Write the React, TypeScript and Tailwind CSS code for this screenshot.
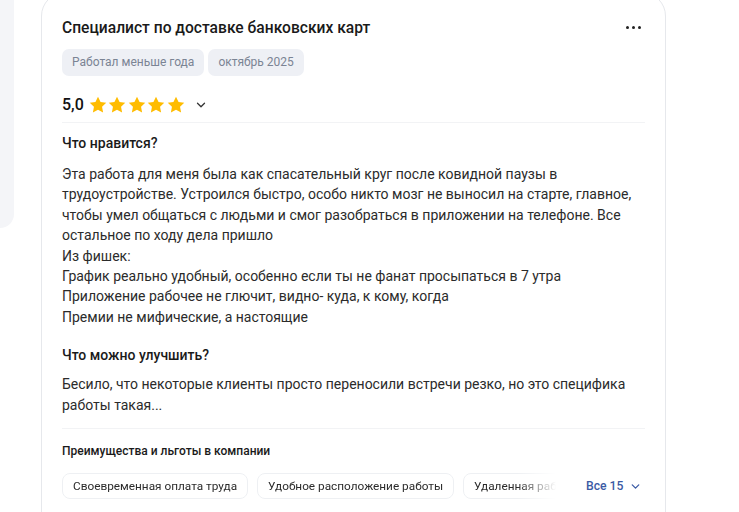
import { ChevronDown } from "lucide-react";

const likes = [
  "Эта работа для меня была как спасательный круг после ковидной паузы в трудоустройстве. Устроился быстро, особо никто мозг не выносил на старте, главное, чтобы умел общаться с людьми и смог разобраться в приложении на телефоне. Все остальное по ходу дела пришло",
  "Из фишек:",
  "График реально удобный, особенно если ты не фанат просыпаться в 7 утра",
  "Приложение рабочее не глючит, видно- куда, к кому, когда",
  "Премии не мифические, а настоящие",
];

const perks = [
  "Своевременная оплата труда",
  "Удобное расположение работы",
  "Удаленная работа",
];

function Star() {
  return (
    <svg width="18" height="18" viewBox="0 0 24 24" fill="#ffbc00">
      <path d="M12 1l3.4 7 7.6 1-5.6 5.3 1.4 7.7L12 18.3 5.2 22l1.4-7.7L1 9l7.6-1z" />
    </svg>
  );
}

export default function App() {
  return (
    <div
      className="flex h-[512px] w-[739px] overflow-hidden bg-white text-[#1f1f1f]"
      style={{ fontFamily: "Roboto, 'Noto Sans', sans-serif" }}
    >
      <div className="h-[228px] w-[14px] shrink-0 rounded-br-[18px] bg-[#f4f5f8]" />

      <div className="ml-[27px] -mt-[8px] w-[625px] shrink-0 self-start rounded-[24px] border border-[#e6e8ec] bg-white px-[20px] pt-[23px] pb-[40px]">
        <div className="flex items-start justify-between">
          <h1 className="text-[15.6px] font-medium leading-[24px] text-[#1a1a1a]">
            Специалист по доставке банковских карт
          </h1>
          <div className="mt-[10px] mr-[4px] flex gap-[3px]">
            <span className="h-[3px] w-[3px] rounded-full bg-[#222]" />
            <span className="h-[3px] w-[3px] rounded-full bg-[#222]" />
            <span className="h-[3px] w-[3px] rounded-full bg-[#222]" />
          </div>
        </div>

        <div className="mt-[9px] flex gap-[4px]">
          <span className="rounded-[7px] bg-[#eef0f5] px-[10px] py-[5px] text-[12px] leading-[17px] text-[#7b8494]">
            Работал меньше года
          </span>
          <span className="rounded-[7px] bg-[#eef0f5] px-[10px] py-[5px] text-[12px] leading-[17px] text-[#7b8494]">
            октябрь 2025
          </span>
        </div>

        <div className="mt-[18px] flex items-center">
          <span className="text-[16px] font-medium leading-[22px] text-[#111]">5,0</span>
          <div className="ml-[5px] flex gap-[1.5px]">
            <Star />
            <Star />
            <Star />
            <Star />
            <Star />
          </div>
          <ChevronDown className="ml-[9px] text-[#333]" size={14} strokeWidth={2.2} />
        </div>

        <div className="mt-[6px] h-px bg-[#f2f3f5]" />

        <h2 className="mt-[10px] text-[14px] font-medium leading-[20px] text-[#1a1a1a]">
          Что нравится?
        </h2>
        <div className="mt-[11px] text-[14px] leading-[20.4px] text-[#2b2b2b]">
          {likes.map((line) => (
            <p key={line}>{line}</p>
          ))}
        </div>

        <h2 className="mt-[18px] text-[14px] font-medium leading-[20px] text-[#1a1a1a]">
          Что можно улучшить?
        </h2>
        <p className="mt-[9px] text-[14px] leading-[20.4px] text-[#2b2b2b]">
          Бесило, что некоторые клиенты просто переносили встречи резко, но это специфика работы
          такая...
        </p>

        <div className="mt-[13px] h-px bg-[#f2f3f5]" />

        <h3 className="mt-[13px] text-[12px] font-medium leading-[18px] text-[#1a1a1a]">
          Преимущества и льготы в компании
        </h3>

        <div className="mt-[13px] flex items-center">
          <div
            className="flex w-[494px] gap-[9px] overflow-hidden"
            style={{
              maskImage: "linear-gradient(to right, black 455px, transparent 494px)",
            }}
          >
            {perks.map((p) => (
              <span
                key={p}
                className="shrink-0 whitespace-nowrap rounded-[8px] border border-[#eef0f3] px-[10px] py-[4px] text-[11.8px] leading-[16px] text-[#2b2b2b]"
              >
                {p}
              </span>
            ))}
          </div>
          <button className="ml-[30px] flex items-center gap-[6px] text-[12.2px] font-medium text-[#3b5ba5]">
            Все 15
            <ChevronDown size={13} strokeWidth={2.4} />
          </button>
        </div>

        <div className="mt-[13px] h-px bg-[#f2f3f5]" />
      </div>
    </div>
  );
}
